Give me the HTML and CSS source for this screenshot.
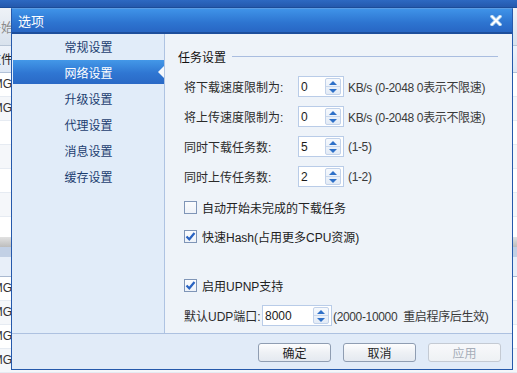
FILE: index.html
```
<!DOCTYPE html>
<html lang="zh-CN">

<head>
    <meta charset="UTF-8">
    <title>选项</title>
    <link rel="stylesheet" href="styles.css">
</head>

<body>

    <!-- main window behind the dialog -->
    <div class="app">
        <div class="app-top"></div>
        <div class="app-tool"><span class="app-search">开始</span></div>
        <div class="app-head"><span class="cell">文件</span></div>
        <div class="app-list top-list">
            <div class="app-row"><span class="cell">IMG</span></div>
            <div class="app-row alt"><span class="cell">IMG</span></div>
            <div class="app-row"></div>
            <div class="app-row alt"></div>
            <div class="app-row"></div>
            <div class="app-row alt"></div>
            <div class="app-row"></div>
        </div>
        <div class="app-split"></div>
        <div class="app-head2"></div>
        <div class="app-list">
            <div class="app-row"><span class="cell">IMG</span></div>
            <div class="app-row alt"><span class="cell">IMG</span></div>
            <div class="app-row"><span class="cell">IMG</span></div>
            <div class="app-row alt"><span class="cell">IMG</span></div>
        </div>
    </div>

    <!-- options dialog -->
    <div class="dialog">
        <div class="dlg-title">
            <span>选项</span>
            <svg class="dlg-close" width="12" height="11" viewBox="0 0 12 11">
                <path d="M2 1.5 L10 9.5 M10 1.5 L2 9.5" stroke="#a6cdee" stroke-width="3.6" stroke-linecap="square" fill="none" />
                <path d="M2 1.5 L10 9.5 M10 1.5 L2 9.5" stroke="#ffffff" stroke-width="1.8" stroke-linecap="square" fill="none" />
            </svg>
        </div>

        <div class="dlg-main">
            <ul class="nav">
                <li>常规设置</li>
                <li class="active">网络设置</li>
                <li>升级设置</li>
                <li>代理设置</li>
                <li>消息设置</li>
                <li>缓存设置</li>
            </ul>

            <div class="panel">
                <div class="group-title"><span>任务设置</span></div>

                <div class="field">
                    <label>将下载速度限制为:</label>
                    <div class="spin"><span class="spin-val">0</span><span class="spin-btn"><i class="up"></i><i class="down"></i></span></div>
                    <span class="hint">KB/s (0-2048 0表示不限速)</span>
                </div>
                <div class="field">
                    <label>将上传速度限制为:</label>
                    <div class="spin"><span class="spin-val">0</span><span class="spin-btn"><i class="up"></i><i class="down"></i></span></div>
                    <span class="hint">KB/s (0-2048 0表示不限速)</span>
                </div>
                <div class="field">
                    <label>同时下载任务数:</label>
                    <div class="spin"><span class="spin-val">5</span><span class="spin-btn"><i class="up"></i><i class="down"></i></span></div>
                    <span class="hint">(1-5)</span>
                </div>
                <div class="field">
                    <label>同时上传任务数:</label>
                    <div class="spin"><span class="spin-val">2</span><span class="spin-btn"><i class="up"></i><i class="down"></i></span></div>
                    <span class="hint">(1-2)</span>
                </div>

                <div class="check first">
                    <span class="box"></span>
                    <span>自动开始未完成的下载任务</span>
                </div>
                <div class="check">
                    <span class="box checked">
                        <svg width="11" height="11" viewBox="0 0 11 11"><path d="M1.5 5.5 L4.3 8.3 L9.5 2" stroke="#2a63c2" stroke-width="2.2" fill="none" /></svg>
                    </span>
                    <span>快速Hash(占用更多CPU资源)</span>
                </div>
                <div class="check upnp">
                    <span class="box checked">
                        <svg width="11" height="11" viewBox="0 0 11 11"><path d="M1.5 5.5 L4.3 8.3 L9.5 2" stroke="#2a63c2" stroke-width="2.2" fill="none" /></svg>
                    </span>
                    <span>启用UPNP支持</span>
                </div>

                <div class="field udp">
                    <label>默认UDP端口:</label>
                    <div class="spin wide"><span class="spin-val">8000</span><span class="spin-btn"><i class="up"></i><i class="down"></i></span></div>
                    <span class="hint tight">(2000-10000&nbsp;&nbsp;重启程序后生效)</span>
                </div>
            </div>
        </div>

        <div class="dlg-foot">
            <button class="btn">确定</button>
            <button class="btn">取消</button>
            <button class="btn" disabled>应用</button>
        </div>
    </div>

</body>

</html>
```

FILE: styles.css
```
* {
    margin: 0;
    padding: 0;
    box-sizing: border-box;
}

body {
    width: 517px;
    height: 373px;
    overflow: hidden;
    position: relative;
    font-family: "Liberation Sans", "Noto Sans CJK SC", sans-serif;
    font-size: 12px;
    color: #2b2b2b;
}

/* ---------- background window ---------- */

.app {
    height: 373px;
    display: flex;
    flex-direction: column;
    background: white;
}

.app-top {
    height: 8px;
    background: linear-gradient(#2d69c2, #2459ad);
    border-bottom: 1px solid #1c4c98;
}

.app-tool {
    height: 40px;
    display: flex;
    align-items: center;
    background: linear-gradient(#eef2f7, #d9e2ed);
    border-bottom: 1px solid #b8c5d6;
    font-size: 13px;
    color: #8c8c8c;
}

.app-search {
    margin-left: -12px;
}

.app-head {
    height: 28px;
    display: flex;
    align-items: center;
    background: linear-gradient(#eef3fa, #dfe8f5);
    border-bottom: 1px solid #b3c2d8;
    color: #222;
}

.cell {
    width: 12px;
    display: flex;
    justify-content: flex-end;
    overflow: hidden;
    white-space: nowrap;
}

.app-head .cell {
    width: 13px;
}

.app-list.top-list {
    height: 171px;
    overflow: hidden;
}

.app-row {
    height: 24px;
    display: flex;
    align-items: center;
    border-bottom: 1px solid #e6ebf2;
    color: #333;
}

.app-row.alt {
    background: #f5f7fa;
}

.app-split {
    height: 11px;
    background: linear-gradient(#e2e2e2, #bdbdbd);
}

.app-head2 {
    height: 31px;
    background: linear-gradient(#c2d0e5 0, #c2d0e5 10px, #e8eff9 10px);
    border-bottom: 1px solid #aab9d0;
}

/* ---------- dialog ---------- */

.dialog {
    position: absolute;
    left: 11px;
    top: 8px;
    width: 502px;
    height: 362px;
    display: flex;
    flex-direction: column;
    border: 1px solid #2559ab;
    border-top-color: #5d9de4;
    background: #eef3f9;
}

.dlg-title {
    height: 25px;
    display: flex;
    align-items: center;
    justify-content: space-between;
    padding: 0 10px 0 6px;
    background: linear-gradient(#3f93e8, #2d74d0 60%, #2866c4);
    border-bottom: 2px solid #1d4e9c;
    color: white;
    font-size: 13px;
}

.dlg-close {
    display: block;
}

.dlg-main {
    flex: 1;
    display: flex;
}

.nav {
    width: 153px;
    list-style: none;
    background: #e1ecf9;
    border-right: 1px solid #aec3e2;
}

.nav li {
    height: 24px;
    margin-bottom: 2px;
    margin-left: 1px;
    display: flex;
    align-items: center;
    justify-content: center;
    color: #1d3e70;
    position: relative;
}

.nav li.active {
    background: linear-gradient(#4398e8, #2f76d2 55%, #2a69c6);
    color: white;
}

.nav li.active::after {
    content: "";
    position: absolute;
    right: 0;
    top: 6px;
    border-right: 6px solid #f5f8fc;
    border-top: 6px solid transparent;
    border-bottom: 6px solid transparent;
}

.panel {
    flex: 1;
    padding: 14px 14px 0 13px;
    background: #eef3f9;
}

.group-title {
    height: 16px;
    display: flex;
    align-items: center;
    gap: 6px;
    margin-bottom: 12px;
    color: #111;
}

.group-title::after {
    content: "";
    flex: 1;
    height: 1px;
    background: #a9bde0;
}

.field {
    height: 21px;
    display: flex;
    align-items: center;
    padding-left: 6px;
}

.field + .field {
    margin-top: 9px;
}

.field label {
    width: 114px;
}

.field.udp {
    margin-top: 12px;
}

.field.udp label {
    width: 78px;
}

.spin {
    width: 46px;
    height: 21px;
    display: flex;
    align-items: center;
    justify-content: space-between;
    padding: 2px 2px 2px 2px;
    background: white;
    border: 1px solid #b9cce8;
}

.spin.wide {
    width: 70px;
}

.spin-val {
    color: #1a1a1a;
}

.spin-btn {
    width: 16px;
    height: 17px;
    display: flex;
    flex-direction: column;
    border: 1px solid #c2d2ea;
    border-radius: 2px;
    background: linear-gradient(#f6f9fd, #e3ebf6);
}

.spin-btn i {
    flex: 1;
    display: flex;
    align-items: center;
    justify-content: center;
}

.spin-btn i.up {
    border-bottom: 1px solid #c9d7ec;
}

.spin-btn i.up::before {
    content: "";
    border-bottom: 4px solid #2f70c8;
    border-left: 4px solid transparent;
    border-right: 4px solid transparent;
}

.spin-btn i.down::before {
    content: "";
    border-top: 4px solid #2f70c8;
    border-left: 4px solid transparent;
    border-right: 4px solid transparent;
}

.hint {
    margin-left: 4px;
    color: #3a3a3a;
    letter-spacing: -0.35px;
}

.hint.tight {
    margin-left: 1px;
}

.check {
    height: 16px;
    display: flex;
    align-items: center;
    gap: 5px;
    padding-left: 6px;
    margin-top: 13px;
    color: #222;
}

.check.first {
    margin-top: 12px;
}

.check.upnp {
    margin-top: 33px;
}

.box {
    width: 13px;
    height: 13px;
    display: flex;
    align-items: center;
    justify-content: center;
    border: 1px solid #7f95b7;
    background: linear-gradient(#fbfcfe, #eef2f8);
}

.box svg {
    display: block;
}

.dlg-foot {
    height: 36px;
    display: flex;
    justify-content: flex-end;
    gap: 12px;
    padding: 9px 11px 0 0;
    background: #e1ebf8;
    border-top: 1px solid #adc1e0;
}

.btn {
    width: 73px;
    height: 19px;
    font: inherit;
    color: #1f1f1f;
    border: 1px solid #8f9db2;
    border-radius: 3px;
    background: linear-gradient(#fdfdfe, #eef1f5 50%, #e4e9f0);
}

.btn:disabled {
    color: #a6adb8;
    border-color: #c4cad3;
    background: linear-gradient(#f8f9fb, #eef1f4);
}
```
